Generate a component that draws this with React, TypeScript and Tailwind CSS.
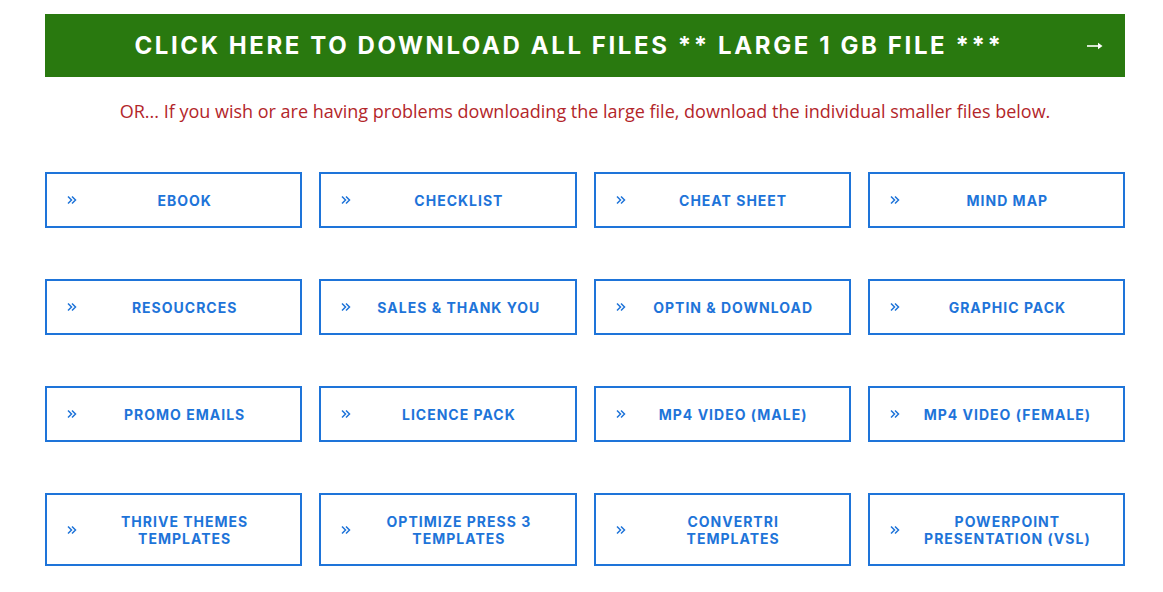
import React from 'react';

const items: string[][] = [
  ['EBOOK'],
  ['CHECKLIST'],
  ['CHEAT SHEET'],
  ['MIND MAP'],
  ['RESOUCRCES'],
  ['SALES & THANK YOU'],
  ['OPTIN & DOWNLOAD'],
  ['GRAPHIC PACK'],
  ['PROMO EMAILS'],
  ['LICENCE PACK'],
  ['MP4 VIDEO (MALE)'],
  ['MP4 VIDEO (FEMALE)'],
  ['THRIVE THEMES', 'TEMPLATES'],
  ['OPTIMIZE PRESS 3', 'TEMPLATES'],
  ['CONVERTRI', 'TEMPLATES'],
  ['POWERPOINT', 'PRESENTATION (VSL)'],
];

const Chevrons = () => (
  <svg width="10" height="10" viewBox="0 0 10 10" fill="none" stroke="#1e74d9" strokeWidth="1.5">
    <path d="M1 1.5 L4.5 5 L1 8.5" />
    <path d="M5 1.5 L8.5 5 L5 8.5" />
  </svg>
);

const Arrow = () => (
  <svg width="16" height="8" viewBox="0 0 16 8" fill="white">
    <rect x="0" y="3.2" width="12" height="1.6" />
    <path d="M11 0.8 L15.5 4 L11 7.2 Z" />
  </svg>
);

const FileButton = ({ lines, tall }: { lines: string[]; tall: boolean }) => (
  <a
    href="#"
    className={`flex items-center border-2 border-[#1e74d9] bg-white pl-[20px] pr-[8px] ${tall ? 'h-[73px]' : 'h-[56px]'}`}
  >
    <span className="flex w-[10px] shrink-0 items-center">
      <Chevrons />
    </span>
    <span className="flex-1 text-center text-[14px] font-bold leading-[17px] tracking-[1px] text-[#1e74d9]">
      {lines.map((l) => (
        <span key={l} className="block">
          {l}
        </span>
      ))}
    </span>
  </a>
);

export default function App() {
  return (
    <div className="min-h-[592px] bg-white font-['Inter',sans-serif]">
      <div className="ml-[45px] w-[1080px] pt-[14px]">
        <a href="#" className="flex h-[63px] items-center bg-[#29790f] pl-[6px] text-white">
          <span className="flex-1 text-center text-[24px] font-bold tracking-[2.6px]">
            CLICK HERE TO DOWNLOAD ALL FILES ** LARGE 1 GB FILE ***
          </span>
          <span className="mr-[22px] flex w-[16px] items-center">
            <Arrow />
          </span>
        </a>
        <p className="mt-[21px] text-center font-['Open_Sans',sans-serif] text-[18px] leading-[26px] text-[#b3262a]">
          OR... If you wish or are having problems downloading the large file, download the individual smaller files below.
        </p>
        <div className="mt-[48px] grid grid-cols-4 gap-x-[17px] gap-y-[51px]">
          {items.map((lines, i) => (
            <FileButton key={i} lines={lines} tall={i >= 12} />
          ))}
        </div>
      </div>
    </div>
  );
}
